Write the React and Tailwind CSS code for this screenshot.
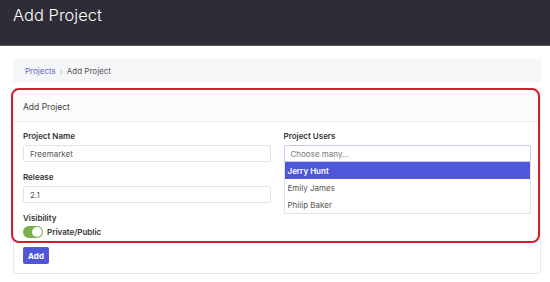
import React from 'react';

const users = ['Jerry Hunt', 'Emily James', 'Philip Baker'];

const Field = ({ label, value, className = '' }) => (
  <div className={className}>
    <label className="block text-[8px] font-semibold text-[#333] mb-[3px] leading-[12px]">{label}</label>
    <div className="h-[17px] border border-[#e1e3e7] rounded-[2px] px-[6px] flex items-center text-[8px] text-[#555]">
      {value}
    </div>
  </div>
);

export default function App() {
  return (
    <div className="w-[550px] h-[282px] bg-white overflow-hidden" style={{ fontFamily: 'Inter, "Liberation Sans", sans-serif' }}>
      {/* top bar */}
      <div className="h-[46px] bg-[#2e2c36] border-b border-[#55545c] px-[13px] pt-[4px]">
        <h1 className="text-[16.5px] leading-[22px] text-white font-light">Add Project</h1>
      </div>

      <div className="ml-[13px] mr-[9px] mt-[13px]">
        {/* breadcrumb */}
        <div className="h-[23px] bg-[#f5f6f8] rounded-[2px] flex items-center px-[12px] text-[8px]">
          <span className="text-[#6468c4]">Projects</span>
          <span className="text-[#b5b5b5] mx-[4px]">›</span>
          <span className="text-[#555]">Add Project</span>
        </div>

        {/* card */}
        <div className="relative mt-[6px] border border-[#e8e9ec] rounded-[3px]">
          <div className="h-[33px] border-b border-[#eceef1] bg-[#fcfcfd] flex items-center pt-[4px] px-[9px] text-[8.5px] text-[#444]">
            Add Project
          </div>

          <div className="px-[9px] pt-[8px] grid grid-cols-2 gap-x-[13px]">
            <div>
              <Field label="Project Name" value="Freemarket" />
              <Field label="Release" value="2.1" className="mt-[9px]" />
              <div className="mt-[10px]">
                <label className="block text-[8px] font-semibold text-[#333] leading-[10px] mb-[3px]">Visibility</label>
                <div className="flex items-center gap-[4px]">
                  <div className="w-[20px] h-[12px] rounded-full bg-[#7bb149] flex items-center justify-end px-[1px]">
                    <div className="w-[10px] h-[10px] rounded-full bg-white" />
                  </div>
                  <span className="text-[8px] leading-[12px] font-semibold text-[#333]">Private/Public</span>
                </div>
              </div>
            </div>

            <div>
              <label className="block text-[8px] font-semibold text-[#333] mb-[3px] leading-[12px]">Project Users</label>
              <div className="h-[17px] border border-[#c7c9f2] rounded-t-[2px] px-[6px] flex items-center text-[8px] text-[#777]">
                Choose many...
              </div>
              <div className="border border-t-0 border-[#e1e3e7] text-[8px]">
                {users.map((u, i) => (
                  <div
                    key={u}
                    className={`h-[17px] flex items-center px-[3px] ${i === 0 ? 'bg-[#4e57d9] text-white font-semibold' : 'text-[#555]'}`}
                  >
                    {u}
                  </div>
                ))}
              </div>
            </div>
          </div>

          <div className="px-[9px] pt-[9px] pb-[9px] flex">
            <button className="block h-[17px] w-[26px] bg-[#4f57d8] rounded-[2px] text-white text-[8px] font-bold">Add</button>
          </div>

          {/* highlight annotation */}
          <div className="absolute left-[-3px] right-0 top-[-1px] h-[155px] border-2 border-[#d21f2b] rounded-[8px] pointer-events-none" />
        </div>
      </div>
    </div>
  );
}
